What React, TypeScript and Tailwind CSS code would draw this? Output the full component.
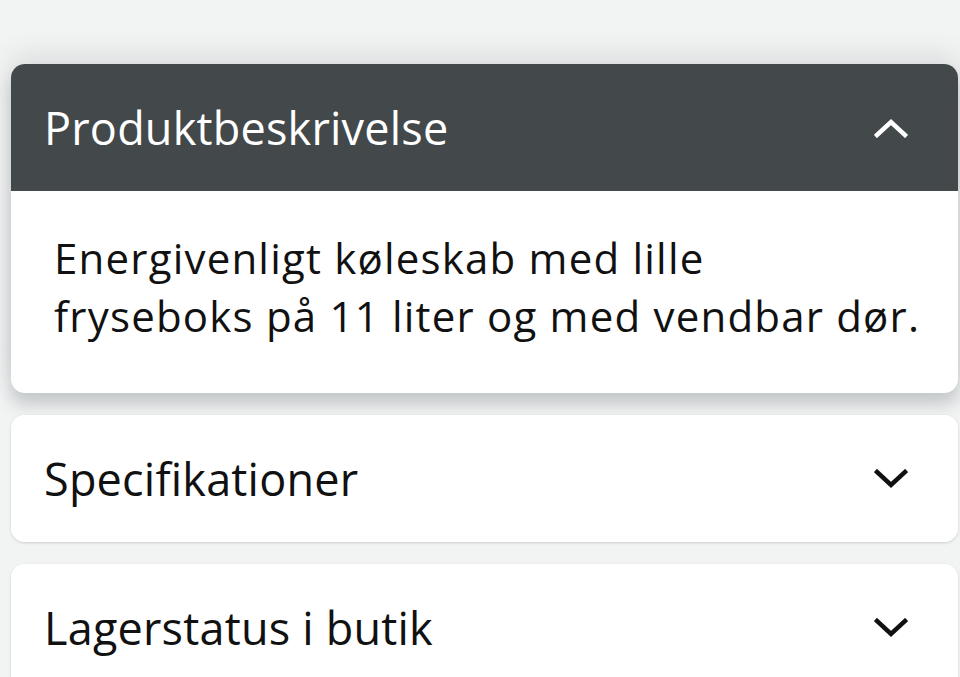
import React, { useState } from "react";

const sections = [
    { title: "Produktbeskrivelse", body: "Energivenligt køleskab med lille\nfryseboks på 11 liter og med vendbar dør." },
    { title: "Specifikationer", body: "" },
    { title: "Lagerstatus i butik", body: "" },
];

const Chevron: React.FC<{ up: boolean }> = ({ up }) => (
    <svg width="34" height="20" viewBox="0 0 34 20" fill="none" className="shrink-0">
        <path
            d={up ? "M3 17 L17 4 L31 17" : "M3 3 L17 16 L31 3"}
            stroke="currentColor"
            strokeWidth="4.5"
            strokeLinecap="square"
            strokeLinejoin="miter"
        />
    </svg>
);

const App: React.FC = () => {
    const [open, setOpen] = useState(0);

    return (
        <div className="min-h-screen bg-[#f2f3f3] pt-[64px] pl-[11px] pr-[2px] flex flex-col gap-[22px] font-['Open_Sans',sans-serif] overflow-hidden">
            {sections.map((s, i) => {
                const isOpen = open === i;
                return (
                    <div
                        key={s.title}
                        className={`rounded-[14px] bg-white overflow-hidden ${
                            isOpen
                                ? "shadow-[0_12px_16px_rgba(70,85,90,0.24),0_-8px_28px_rgba(70,85,90,0.14)]"
                                : "shadow-[0_1px_3px_rgba(0,0,0,0.16)]"
                        }`}
                    >
                        <button
                            className={`w-full h-[127px] flex items-center justify-between pl-[33px] pr-[50px] text-left ${
                                isOpen ? "bg-[#43484b] text-white" : "bg-white text-[#111]"
                            }`}
                            onClick={() => setOpen(isOpen ? -1 : i)}
                        >
                            <span className="text-[45px] leading-none tracking-[0.2px]">{s.title}</span>
                            <Chevron up={isOpen} />
                        </button>
                        {isOpen && (
                            <div className="h-[202px] pl-[43px] pr-[20px] pt-[38px] text-[42px] leading-[58px] tracking-[1.2px] text-[#111] whitespace-pre-line">
                                {s.body}
                            </div>
                        )}
                    </div>
                );
            })}
        </div>
    );
};

export default App;
